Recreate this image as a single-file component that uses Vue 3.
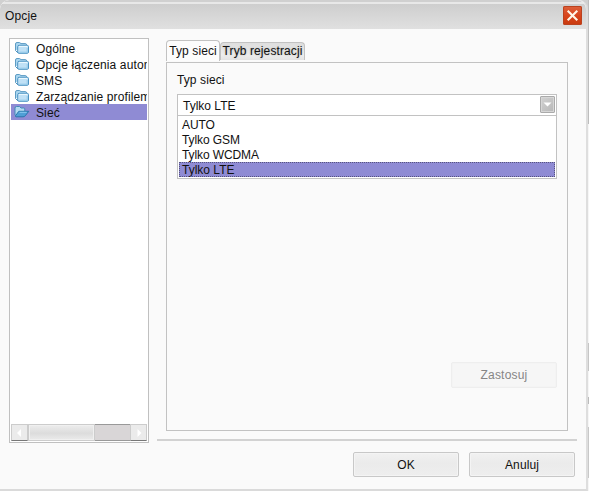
<script setup>
import { ref } from 'vue'

const categories = ['Ogólne', 'Opcje łączenia automatycznego', 'SMS', 'Zarządzanie profilem', 'Sieć']
const activeCategory = ref(4)
const networkTypes = ['AUTO', 'Tylko GSM', 'Tylko WCDMA', 'Tylko LTE']
const selected = ref(3)
</script>

<template>
  <div class="desktop">
    <div class="dialog">
      <header class="titlebar">
        <span class="title">Opcje</span>
        <button class="close" aria-label="Zamknij">
          <svg width="19" height="19" viewBox="0 0 19 19">
            <path d="M4.7 4.7L14.3 14.3M14.3 4.7L4.7 14.3" stroke="#fff6e8" stroke-width="2.1" fill="none" />
          </svg>
        </button>
      </header>
      <div class="body">
        <aside class="sidebar">
          <ul class="tree">
            <li v-for="(c, i) in categories" :key="c" :class="{ active: i === activeCategory }" @click="activeCategory = i">
              <svg v-if="i !== activeCategory" class="folder" width="16" height="14" viewBox="0 0 16 14">
                <path d="M1.5 9.5V3Q1.5 1.5 3 1.5H5.5L7 2.6H11.5Q12.5 2.6 12.5 4" fill="#a9d5ef" stroke="#5d9cc4" />
                <path d="M1.5 9.5L4 12" stroke="#4d90bd" />
                <rect x="3.7" y="4.3" width="10.8" height="8" rx="1.3" fill="#c0e1f6" stroke="#4c93c2" />
                <path d="M5 5.4H13.2" stroke="#eefaff" />
                <path d="M5.2 11.2H13.2V7" fill="none" stroke="#92c8e8" />
              </svg>
              <svg v-else class="folder" width="16" height="14" viewBox="0 0 16 14">
                <path d="M1 10V3Q1 1.5 2.5 1.5H5.5L7 3H9.8Q10.8 3 10.8 4V7" fill="#b3daf1" stroke="#4389b9" />
                <path d="M1.5 10.7L4.8 6.3H14.8L11.2 10.8Q10.5 11.8 9 11.8H2.2Q1.2 11.7 1.5 10.7Z" fill="#4f9fd6" stroke="#2876ac" />
                <path d="M5.5 7.3H12.7" stroke="#8ccaf0" />
              </svg>
              <span>{{ c }}</span>
            </li>
          </ul>
          <div class="scrollbar">
            <span class="arrow"><svg width="17" height="16"><path d="M10 4V12L6 8Z" fill="#fff" /></svg></span>
            <span class="thumb"></span>
            <span class="track"></span>
            <span class="arrow"><svg width="17" height="16"><path d="M7.5 4V12L11.5 8Z" fill="#fff" /></svg></span>
          </div>
        </aside>
        <main class="content">
          <nav class="tabs">
            <button class="tab current">Typ sieci</button>
            <button class="tab other">Tryb rejestracji</button>
          </nav>
          <section class="panel">
            <label class="label">Typ sieci</label>
            <div class="combo">
              <div class="value">
                <span>{{ networkTypes[selected] }}</span>
                <span class="drop"><svg width="13" height="15"><path d="M2.5 5.5H10.5L6.5 9.5Z" fill="#fff" /></svg></span>
              </div>
              <ul class="options">
                <li v-for="(n, i) in networkTypes" :key="n" :class="{ chosen: i === selected }" @click="selected = i">{{ n }}</li>
              </ul>
            </div>
            <button class="button apply" disabled>Zastosuj</button>
          </section>
          <hr class="rule" />
          <footer class="actions">
            <button class="button">OK</button>
            <button class="button">Anuluj</button>
          </footer>
        </main>
      </div>
    </div>
    <div class="edge"><i class="seg a"></i><i class="seg b"></i><i class="seg c"></i><i class="seg d"></i></div>
  </div>
</template>

<style>
body { margin: 0; overflow: hidden; }
</style>

<style scoped>
* { box-sizing: border-box; }
button { font: inherit; letter-spacing: inherit; color: inherit; padding: 0; margin: 0; border: 0; background: none; display: block; }
ul { list-style: none; margin: 0; padding: 0; }
svg { display: block; }
.desktop { width: 589px; height: 491px; display: flex; background: #d0d0d0; font: 12px/16px "Liberation Sans", Arial, sans-serif; color: #111; overflow: hidden; }
.dialog { width: 588px; height: 491px; flex: none; display: flex; flex-direction: column; background: #fafafa; border-right: 2px solid #dedede; border-bottom: 2px solid #dadada; border-radius: 9px 9px 0 0; overflow: hidden; }
.titlebar { height: 29px; flex: none; display: flex; justify-content: space-between; padding: 3px 2px 0 5px; background: linear-gradient(#d0d0d0 0 2px, #e8e8e8 2px 4px, #cecece 4px, #e0e0e0); border-radius: 9px 9px 0 0; }
.title { padding-top: 5px; letter-spacing: .15px; }
.close { width: 19px; height: 19px; margin: 3px 2px 0 0; border-radius: 2px; background: linear-gradient(#dd613c, #d8451c 50%, #c8390e); box-shadow: inset 0 0 0 1px #ba421f; }
.body { display: flex; flex: 1; padding: 9px 0 0 9px; }
.sidebar { width: 140px; height: 405px; border: 1px solid #c0c0c0; background: #fff; padding: 1px; display: flex; flex-direction: column; overflow: hidden; }
.tree { flex: 1; letter-spacing: .12px; }
.tree li { display: flex; align-items: center; height: 16px; padding: 1px 0 0 3px; white-space: nowrap; overflow: hidden; }
.tree li.active { background: #8f8bd4; }
.folder { flex: none; margin: -2px 6px 0 0; }
.scrollbar { height: 17px; display: flex; flex: none; background: #eee; }
.arrow { width: 17px; flex: none; background: #ebebeb; border: 1px solid #ccc; border-bottom: 1px solid #777; }
.arrow svg { margin-left: -1px; }
.thumb { width: 67px; flex: none; border: 1px solid #ccc; box-shadow: inset 0 0 0 1px #f0f0f0; background: linear-gradient(#ededed, #dcdcdc 55%, #ebebeb); }
.track { flex: 1; background: #d9d6d7; border-top: 1px solid #999; border-bottom: 1px solid #999; }
.content { display: flex; flex-direction: column; padding-left: 8px; width: 429px; }
.tabs { display: flex; align-items: flex-end; height: 24px; padding: 0 0 1px 9px; }
.tab { white-space: nowrap; border: 1px solid #c2c2c2; border-bottom: 0; border-radius: 4px 4px 0 0; }
.current { width: 54px; height: 21px; background: #fcfcfc; letter-spacing: .1px; }
.other { width: 85px; height: 18px; background: linear-gradient(#dedede, #eee 70%, #e3e3e3); text-shadow: 0 0 2px #aaa; letter-spacing: .1px; line-height: 15px; margin-bottom: 1px; }
.panel { width: 402px; height: 369px; margin-left: 9px; border: 1px solid #c2c2c2; padding: 9px 10px 0; display: flex; flex-direction: column; }
.label { height: 22px; letter-spacing: .1px; }
.combo { width: 380px; height: 85px; border: 1px solid #c2c2c2; background: #fff; }
.value { height: 21px; display: flex; justify-content: space-between; padding: 1px 1px 0 5px; border-bottom: 1px solid #c2c2c2; line-height: 21px; }
.drop { width: 15px; height: 17px; border: 1px solid #aaa; border-radius: 1px; background: linear-gradient(135deg, #d2d2d2, #b7b7b7); box-shadow: inset 0 0 0 1px #d6d6d6; }
.options { padding: 1px; letter-spacing: -.1px; }
.options li { height: 15px; line-height: 17px; padding-left: 3px; }
.options .chosen { background: #8f8bd4; outline: 1px dotted #57547e; outline-offset: -1px; letter-spacing: 0; }
.button { width: 106px; height: 25px; border: 1px solid #c8c8c8; border-radius: 2px; background: linear-gradient(#f1f1f1, #ebebeb 45%, #eee); box-shadow: inset 0 0 0 1px #f4f4f4; letter-spacing: .1px; }
.apply { height: 26px; margin: 183px 0 0 auto; color: #858585; background: #f6f6f6; border-color: #eee; letter-spacing: .2px; }
.rule { width: 420px; height: 2px; margin: 8px 0 0; border: 0; background: #d2d2d2; flex: none; }
.actions { display: flex; gap: 10px; padding: 11px 0 0 196px; }
.edge { width: 1px; display: flex; flex-direction: column; background: #f6f6f6; }
.seg.a { height: 124px; background: #bdbdbd; }
.seg.b { height: 28px; margin-top: 219px; background: #c6c6c6; }
.seg.c { height: 7px; margin-top: 26px; background: #bbb; }
.seg.d { height: 51px; margin-top: 23px; background: #c8c8c8; }
</style>
